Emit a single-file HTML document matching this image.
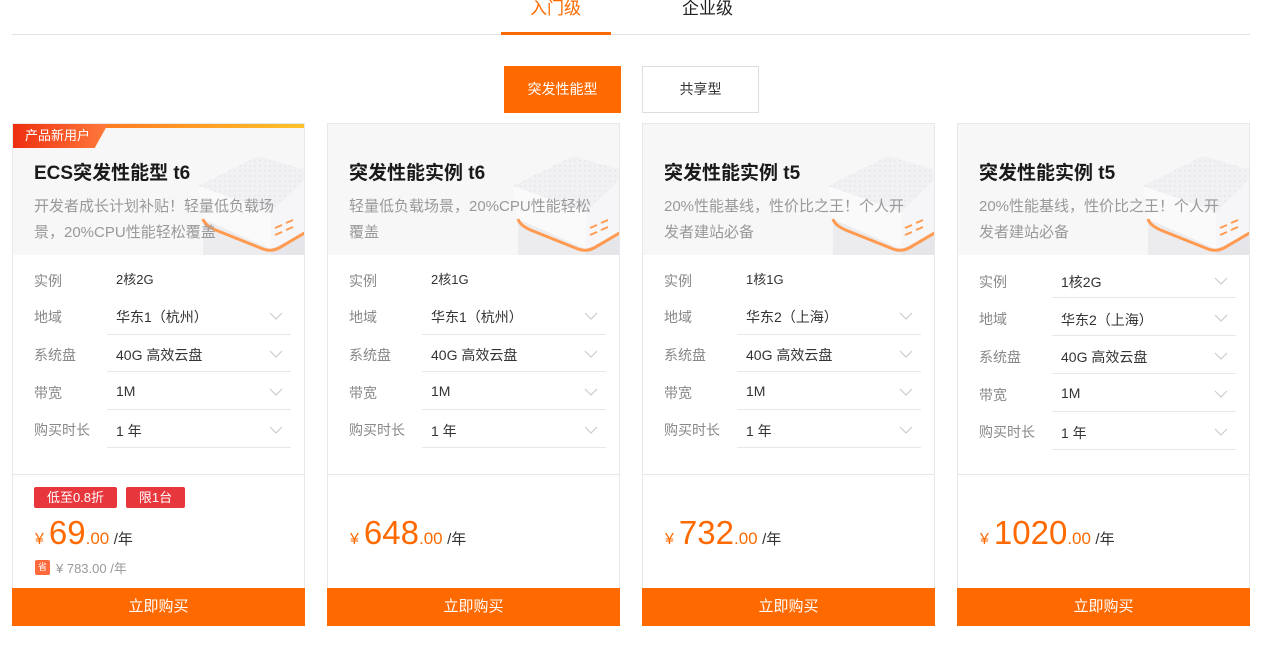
<!DOCTYPE html>
<html><head><meta charset="utf-8">
<style>
*{margin:0;padding:0;box-sizing:border-box}
body{width:1274px;height:646px;background:#fff;font-family:"Liberation Sans","Noto Sans CJK SC",sans-serif;position:relative;overflow:hidden;color:#333}
.abs{position:absolute}
.tab{position:absolute;top:-2px;font-size:17px;line-height:22px}
.card{position:absolute;top:123px;width:293px;height:503px;border:1px solid #e8e8e8;background:#fff}
.hd{position:absolute;left:0;top:0;width:291px;height:131px;background:#f7f7f8;overflow:hidden}
.ttl{position:absolute;left:21px;top:34px;font-size:19px;font-weight:bold;color:#1a1a1a;white-space:nowrap}
.desc{position:absolute;left:21px;top:70px;width:250px;font-size:15px;line-height:26px;color:#999}
.lab{position:absolute;left:21px;font-size:14px;color:#888}
.val{position:absolute;left:103px;font-size:14px;color:#333}
.ln{position:absolute;left:94px;width:184px;height:1px;background:#e8e8e8}
.chev{position:absolute;left:256px;width:14px;height:8px}
.div{position:absolute;left:0;top:350px;width:291px;height:1px;background:#e8e8e8}
.price{position:absolute;left:22px;top:390px;color:#ff6a00;white-space:nowrap}
.price .y{font-size:16px;margin-right:5px}
.price .b{font-size:33px}
.price .s{font-size:17px}
.price .u{font-size:15px;color:#333}
.btn{position:absolute;left:-1px;top:464px;width:293px;height:38px;background:#ff6a00;color:#fff;font-size:15px;text-align:center;line-height:38px}
.tag{position:absolute;top:363px;height:21px;background:#e8363d;color:#fff;font-size:13px;line-height:21px;text-align:center;border-radius:2px}
</style></head><body>
<div class="abs" style="left:12px;top:34px;width:1238px;height:1px;background:#e2e2e6"></div>
<div class="abs" style="left:501px;top:32px;width:110px;height:3px;background:#ff6a00"></div>
<div class="tab" style="left:530px;color:#ff6a00">入门级</div>
<div class="tab" style="left:682px;color:#222">企业级</div>
<div class="abs" style="left:504px;top:66px;width:117px;height:47px;background:#ff6a00;color:#fff;font-size:14px;line-height:47px;text-align:center">突发性能型</div>
<div class="abs" style="left:642px;top:66px;width:117px;height:47px;border:1px solid #ddd;color:#333;font-size:14px;line-height:45px;text-align:center">共享型</div>

<svg width="0" height="0" style="position:absolute">
<defs>
<pattern id="dots" width="5" height="5" patternUnits="userSpaceOnUse"><circle cx="2" cy="2" r="0.7" fill="#dcdce2"/></pattern>
<g id="srv">
<polygon points="10,65 78,95 78,110 10,110" fill="#ececef"/>
<polygon points="78,95 120,75 120,110 78,110" fill="#e6e6ea"/>
<polygon points="5,32 65,2 120,18 78,58" fill="#f1f1f4"/>
<polygon points="5,32 65,2 120,18 78,58" fill="url(#dots)"/>
<polygon points="5,32 78,58 78,95 10,65" fill="#fafafb"/>
<polygon points="78,58 120,18 120,75 78,95" fill="#f6f6f8"/>
<path d="M10,65 Q12,72 25,77 L70,95 Q78,98 86,94 L120,74" stroke="#ff9a50" stroke-width="3" fill="none"/>
<path d="M82,74 l7,-3 M93,69 l7,-3 M82,81 l7,-3 M93,76 l7,-3" stroke="#ff9a50" stroke-width="2"/>
</g>
<g id="chv"><path d="M1,1 L7,7 L13,1" stroke="#ccc" stroke-width="1.2" fill="none"/></g>
</defs></svg>

<!-- Card 1 -->
<div class="card" style="left:12px">
 <div class="hd">
  <svg class="abs" style="left:180px;top:30px" width="113" height="101"><use href="#srv"/></svg>
  <div class="abs" style="left:0;top:0;width:291px;height:4px;background:linear-gradient(90deg,#ff5a1f,#ffc22a)"></div>
  <div class="abs" style="left:0;top:0;width:95px;height:24px;background:linear-gradient(90deg,#ee2f10,#ff7a3c);clip-path:polygon(0 0,100% 0,86% 100%,0 100%);color:#fff;font-size:13px;line-height:24px;padding-left:12px">产品新用户</div>
  <div class="ttl">ECS突发性能型 t6</div>
  <div class="desc">开发者成长计划补贴！轻量低负载场景，20%CPU性能轻松覆盖</div>
 </div>
 <div class="lab" style="top:147px">实例</div><div class="val" style="top:145px;font-size:13px">2核2G</div>
 <div class="lab" style="top:183px">地域</div><div class="val" style="top:183px">华东1（杭州）</div><svg class="chev" style="top:188px"><use href="#chv"/></svg><div class="ln" style="top:210px"></div>
 <div class="lab" style="top:221px">系统盘</div><div class="val" style="top:221px">40G 高效云盘</div><svg class="chev" style="top:226px"><use href="#chv"/></svg><div class="ln" style="top:247px"></div>
 <div class="lab" style="top:259px">带宽</div><div class="val" style="top:259px">1M</div><svg class="chev" style="top:264px"><use href="#chv"/></svg><div class="ln" style="top:285px"></div>
 <div class="lab" style="top:296px">购买时长</div><div class="val" style="top:297px">1 年</div><svg class="chev" style="top:302px"><use href="#chv"/></svg><div class="ln" style="top:323px"></div>
 <div class="div"></div>
 <div class="tag" style="left:21px;width:83px">低至0.8折</div>
 <div class="tag" style="left:113px;width:59px">限1台</div>
 <div class="price"><span class="y">¥</span><span class="b">69</span><span class="s">.00</span> <span class="u">/年</span></div>
 <div class="abs" style="left:22px;top:436px;width:15px;height:15px;background:#ff6a3c;border-radius:2px;color:#fff;font-size:9px;line-height:15px;text-align:center">省</div>
 <div class="abs" style="left:43px;top:434px;font-size:13px;color:#999">¥ 783.00 /年</div>
 <div class="btn">立即购买</div>
</div>

<!-- Card 2 -->
<div class="card" style="left:327px">
 <div class="hd">
  <svg class="abs" style="left:180px;top:30px" width="113" height="101"><use href="#srv"/></svg>
  <div class="ttl">突发性能实例 t6</div>
  <div class="desc">轻量低负载场景，20%CPU性能轻松覆盖</div>
 </div>
 <div class="lab" style="top:147px">实例</div><div class="val" style="top:145px;font-size:13px">2核1G</div>
 <div class="lab" style="top:183px">地域</div><div class="val" style="top:183px">华东1（杭州）</div><svg class="chev" style="top:188px"><use href="#chv"/></svg><div class="ln" style="top:210px"></div>
 <div class="lab" style="top:221px">系统盘</div><div class="val" style="top:221px">40G 高效云盘</div><svg class="chev" style="top:226px"><use href="#chv"/></svg><div class="ln" style="top:247px"></div>
 <div class="lab" style="top:259px">带宽</div><div class="val" style="top:259px">1M</div><svg class="chev" style="top:264px"><use href="#chv"/></svg><div class="ln" style="top:285px"></div>
 <div class="lab" style="top:296px">购买时长</div><div class="val" style="top:297px">1 年</div><svg class="chev" style="top:302px"><use href="#chv"/></svg><div class="ln" style="top:323px"></div>
 <div class="div"></div>
 <div class="price"><span class="y">¥</span><span class="b">648</span><span class="s">.00</span> <span class="u">/年</span></div>
 <div class="btn">立即购买</div>
</div>

<!-- Card 3 -->
<div class="card" style="left:642px">
 <div class="hd">
  <svg class="abs" style="left:180px;top:30px" width="113" height="101"><use href="#srv"/></svg>
  <div class="ttl">突发性能实例 t5</div>
  <div class="desc">20%性能基线，性价比之王！个人开发者建站必备</div>
 </div>
 <div class="lab" style="top:147px">实例</div><div class="val" style="top:145px;font-size:13px">1核1G</div>
 <div class="lab" style="top:183px">地域</div><div class="val" style="top:183px">华东2（上海）</div><svg class="chev" style="top:188px"><use href="#chv"/></svg><div class="ln" style="top:210px"></div>
 <div class="lab" style="top:221px">系统盘</div><div class="val" style="top:221px">40G 高效云盘</div><svg class="chev" style="top:226px"><use href="#chv"/></svg><div class="ln" style="top:247px"></div>
 <div class="lab" style="top:259px">带宽</div><div class="val" style="top:259px">1M</div><svg class="chev" style="top:264px"><use href="#chv"/></svg><div class="ln" style="top:285px"></div>
 <div class="lab" style="top:296px">购买时长</div><div class="val" style="top:297px">1 年</div><svg class="chev" style="top:302px"><use href="#chv"/></svg><div class="ln" style="top:323px"></div>
 <div class="div"></div>
 <div class="price"><span class="y">¥</span><span class="b">732</span><span class="s">.00</span> <span class="u">/年</span></div>
 <div class="btn">立即购买</div>
</div>

<!-- Card 4 -->
<div class="card" style="left:957px">
 <div class="hd">
  <svg class="abs" style="left:180px;top:30px" width="113" height="101"><use href="#srv"/></svg>
  <div class="ttl">突发性能实例 t5</div>
  <div class="desc">20%性能基线，性价比之王！个人开发者建站必备</div>
 </div>
 <div class="lab" style="top:148px">实例</div><div class="val" style="top:148px">1核2G</div><svg class="chev" style="top:153px"><use href="#chv"/></svg><div class="ln" style="top:173px"></div>
 <div class="lab" style="top:185px">地域</div><div class="val" style="top:186px">华东2（上海）</div><svg class="chev" style="top:190px"><use href="#chv"/></svg><div class="ln" style="top:211px"></div>
 <div class="lab" style="top:223px">系统盘</div><div class="val" style="top:223px">40G 高效云盘</div><svg class="chev" style="top:228px"><use href="#chv"/></svg><div class="ln" style="top:249px"></div>
 <div class="lab" style="top:261px">带宽</div><div class="val" style="top:261px">1M</div><svg class="chev" style="top:266px"><use href="#chv"/></svg><div class="ln" style="top:287px"></div>
 <div class="lab" style="top:298px">购买时长</div><div class="val" style="top:299px">1 年</div><svg class="chev" style="top:304px"><use href="#chv"/></svg><div class="ln" style="top:325px"></div>
 <div class="div"></div>
 <div class="price"><span class="y">¥</span><span class="b">1020</span><span class="s">.00</span> <span class="u">/年</span></div>
 <div class="btn">立即购买</div>
</div>
</body></html>
